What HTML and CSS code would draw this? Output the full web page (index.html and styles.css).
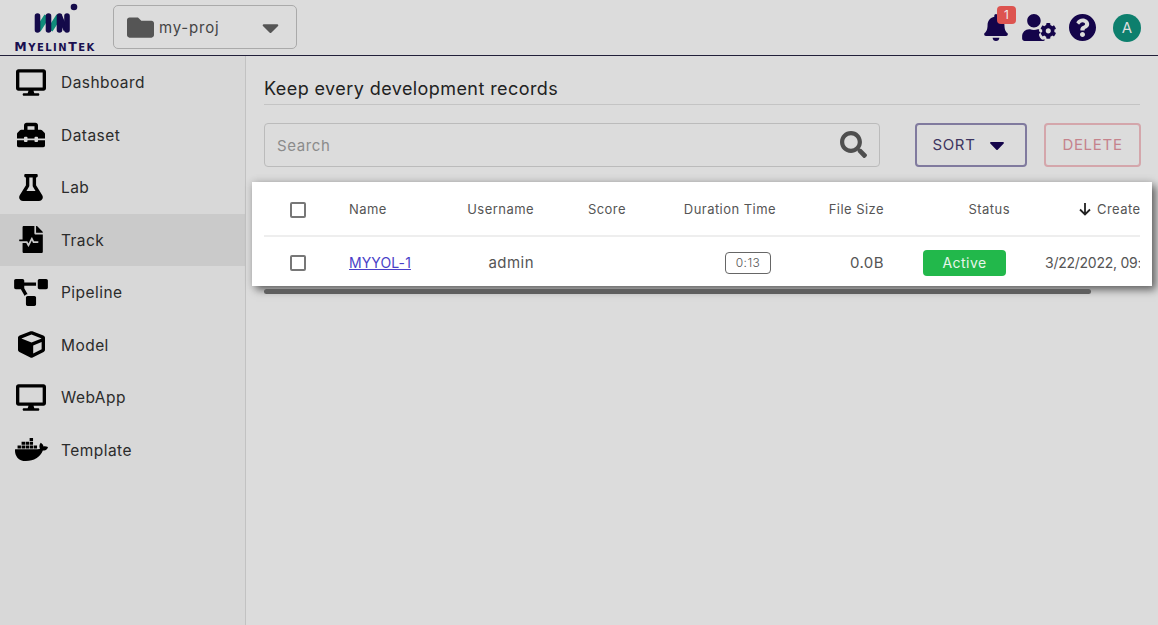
FILE: index.html
```html
<!DOCTYPE html>
<html lang="en">
<head>
    <meta charset="UTF-8">
    <title>Track</title>
    <link rel="stylesheet" href="styles.css">
</head>
<body>
    <header class="topbar">
        <div class="brand">
            <svg class="brand-mark" viewBox="0 0 44 32">
                <circle cx="40" cy="4" r="3.3" fill="#140a4a"/>
                <path d="M4 27L13 13M16 27L25 13" stroke="#0f8c7a" stroke-width="6" fill="none"/>
                <path d="M26 14L32 27" stroke="#140a4a" stroke-width="5" fill="none"/>
                <path d="M3.5 13V27M14.5 13V27M25.5 13V27M33 13V27" stroke="#140a4a" stroke-width="5.6" stroke-linecap="round" fill="none"/>
            </svg>
            <div class="brand-name">M<small>YELIN</small>T<small>EK</small></div>
        </div>
        <div class="project-select">
            <svg class="folder-icon" viewBox="0 0 512 512"><path d="M464 128H272l-64-64H48C21.49 64 0 85.49 0 112v288c0 26.51 21.49 48 48 48h416c26.51 0 48-21.49 48-48V176c0-26.51-21.49-48-48-48z"/></svg>
            <span class="project-name">my-proj</span>
            <svg class="project-caret" viewBox="0 0 320 512"><path d="M31.3 192h257.3c17.8 0 26.7 21.5 14.1 34.1L174.1 354.8c-7.8 7.8-20.5 7.8-28.3 0L17.2 226.1C4.6 213.5 13.5 192 31.3 192z"/></svg>
        </div>
        <div class="top-actions">
            <div class="bell">
                <svg class="top-icon bell-icon" viewBox="0 0 448 512"><path d="M224 512c35.32 0 63.97-28.65 63.97-64H160.03c0 35.35 28.65 64 63.97 64zm215.39-149.71c-19.32-20.76-55.47-51.99-55.47-154.29 0-77.7-54.48-139.9-127.94-155.16V32c0-17.67-14.32-32-31.98-32s-31.98 14.33-31.98 32v20.84C118.56 68.1 64.08 130.3 64.08 208c0 102.3-36.15 133.53-55.47 154.29-6 6.45-8.66 14.16-8.61 21.71.11 16.4 12.98 32 32.1 32h383.8c19.12 0 32-15.6 32.1-32 .05-7.55-2.61-15.27-8.61-21.71z"/></svg>
                <span class="bell-badge">1</span>
            </div>
            <svg class="top-icon cog-icon" viewBox="0 0 640 512"><path d="M610.5 341.3c2.6-14.1 2.6-28.5 0-42.6l25.8-14.9c3-1.7 4.3-5.2 3.3-8.5-6.7-21.6-18.2-41.2-33.2-57.4-2.3-2.5-6-3.1-9-1.4l-25.8 14.9c-10.9-9.3-23.4-16.5-36.9-21.3v-29.8c0-3.4-2.4-6.4-5.7-7.1-22.3-5-45-4.8-66.2 0-3.3.7-5.7 3.7-5.7 7.1v29.8c-13.5 4.8-26 12-36.9 21.3l-25.8-14.9c-2.9-1.7-6.7-1.1-9 1.4-15 16.2-26.5 35.8-33.2 57.4-1 3.3.4 6.8 3.3 8.5l25.8 14.9c-2.6 14.1-2.6 28.5 0 42.6l-25.8 14.9c-3 1.7-4.3 5.2-3.3 8.5 6.7 21.6 18.2 41.1 33.2 57.4 2.3 2.5 6 3.1 9 1.4l25.8-14.9c10.9 9.3 23.4 16.5 36.9 21.3v29.8c0 3.4 2.4 6.4 5.7 7.1 22.3 5 45 4.8 66.2 0 3.3-.7 5.7-3.7 5.7-7.1v-29.8c13.5-4.8 26-12 36.9-21.3l25.8 14.9c2.9 1.7 6.7 1.1 9-1.4 15-16.2 26.5-35.8 33.2-57.4 1-3.3-.4-6.8-3.3-8.5l-25.8-14.9zM496 368.5c-26.8 0-48.5-21.8-48.5-48.5s21.8-48.5 48.5-48.5 48.5 21.8 48.5 48.5-21.7 48.5-48.5 48.5zM224 256c70.7 0 128-57.3 128-128S294.7 0 224 0 96 57.3 96 128s57.3 128 128 128zm201.2 226.5c-2.3-1.2-4.6-2.6-6.8-3.9l-7.9 4.6c-6 3.4-12.8 5.3-19.6 5.3-10.9 0-21.4-4.6-28.9-12.6-18.3-19.8-32.3-43.9-40.2-69.6-5.5-17.7 1.9-36.4 17.9-45.7l7.9-4.6c-.1-2.6-.1-5.2 0-7.8l-7.9-4.6c-16-9.2-23.4-28-17.9-45.7.9-2.9 2.2-5.8 3.2-8.7-3.8-.3-7.5-1.2-11.4-1.2h-16.7c-22.2 10.2-46.9 16-72.9 16s-50.6-5.8-72.9-16h-16.7C60.2 288 0 348.2 0 422.4V464c0 26.5 21.5 48 48 48h352c10.1 0 19.5-3.2 27.2-8.5-1.2-3.8-2-7.7-2-11.8v-9.2z"/></svg>
            <svg class="top-icon help-icon" viewBox="8 8 496 496"><path d="M504 256c0 136.997-111.043 248-248 248S8 392.997 8 256C8 119.083 119.043 8 256 8s248 111.083 248 248zM262.655 90c-54.497 0-89.255 22.957-116.549 63.758-3.536 5.286-2.353 12.415 2.715 16.258l34.699 26.31c5.205 3.947 12.621 3.008 16.665-2.122 17.864-22.658 30.113-35.797 57.303-35.797 20.429 0 45.698 13.148 45.698 32.958 0 14.976-12.363 22.667-32.534 33.976C247.128 238.528 216 254.941 216 296v4c0 6.627 5.373 12 12 12h56c6.627 0 12-5.373 12-12v-1.333c0-28.462 83.186-29.647 83.186-106.667 0-58.002-60.165-102-116.531-102zM256 338c-25.365 0-46 20.635-46 46 0 25.364 20.635 46 46 46s46-20.636 46-46c0-25.365-20.635-46-46-46z"/></svg>
            <div class="avatar">A</div>
        </div>
    </header>

    <div class="layout">
        <nav class="sidebar">
            <a class="nav-item">
                <svg class="nav-icon icon-desktop" viewBox="0 0 576 512"><path d="M528 0H48C21.5 0 0 21.5 0 48v320c0 26.5 21.5 48 48 48h192l-16 48h-72c-13.3 0-24 10.7-24 24s10.7 24 24 24h272c13.3 0 24-10.7 24-24s-10.7-24-24-24h-72l-16-48h192c26.5 0 48-21.5 48-48V48c0-26.5-21.5-48-48-48zm-16 352H64V64h448v288z"/></svg>
                <span>Dashboard</span>
            </a>
            <a class="nav-item">
                <svg class="nav-icon icon-toolbox" viewBox="0 0 512 512"><path d="M502.63 214.63l-45.25-45.25c-6-6-14.14-9.37-22.63-9.37H384V80c0-26.51-21.49-48-48-48H176c-26.51 0-48 21.49-48 48v80H77.25c-8.49 0-16.62 3.37-22.63 9.37L9.37 214.63c-6 6-9.37 14.14-9.37 22.63V320h128v-16c0-8.84 7.16-16 16-16h32c8.84 0 16 7.16 16 16v16h128v-16c0-8.84 7.16-16 16-16h32c8.84 0 16 7.16 16 16v16h128v-82.75c0-8.48-3.37-16.62-9.37-22.62zM320 160H192V96h128v64zm64 208c0 8.84-7.16 16-16 16h-32c-8.84 0-16-7.16-16-16v-16H192v16c0 8.84-7.16 16-16 16h-32c-8.84 0-16-7.16-16-16v-16H0v96c0 17.67 14.33 32 32 32h448c17.67 0 32-14.33 32-32v-96H384v16z"/></svg>
                <span>Dataset</span>
            </a>
            <a class="nav-item">
                <svg class="nav-icon icon-flask" viewBox="0 0 448 512"><path d="M437.2 403.5L320 215V64h8c13.3 0 24-10.7 24-24V24c0-13.3-10.7-24-24-24H120c-13.3 0-24 10.7-24 24v16c0 13.3 10.7 24 24 24h8v151L10.8 403.5C-18.5 450.6 15.3 512 70.9 512h306.2c55.7 0 89.4-61.5 60.1-108.5zM137.9 320l48.2-77.6c3.7-5.2 5.8-11.6 5.8-18.4V64h64v160c0 6.9 2.2 13.2 5.8 18.4l48.2 77.6h-172z"/></svg>
                <span>Lab</span>
            </a>
            <a class="nav-item nav-active">
                <svg class="nav-icon icon-track" viewBox="0 0 448 512"><path d="M288 136V0H88C74.7 0 64 10.7 64 24v232H8c-4.4 0-8 3.6-8 8v16c0 4.4 3.6 8 8 8h140.9c3 0 5.8 1.7 7.2 4.4l19.9 39.8 56.8-113.7c2.9-5.9 11.4-5.9 14.3 0l34.7 69.5H352c8.8 0 16 7.2 16 16s-7.2 16-16 16h-89.9L240 275.8l-56.8 113.7c-2.9 5.9-11.4 5.9-14.3 0L134.1 320H64v168c0 13.3 10.7 24 24 24h336c13.3 0 24-10.7 24-24V160H312c-13.2 0-24-10.8-24-24zm153-31L343.1 7c-4.5-4.5-10.6-7-17-7H320v128h128v-6.1c0-6.3-2.5-12.4-7-16.9z"/></svg>
                <span>Track</span>
            </a>
            <a class="nav-item">
                <svg class="nav-icon icon-pipeline" viewBox="0 0 640 512"><path d="M384 320H256c-17.67 0-32 14.33-32 32v128c0 17.67 14.33 32 32 32h128c17.67 0 32-14.33 32-32V352c0-17.67-14.33-32-32-32zM192 32c0-17.67-14.33-32-32-32H32C14.33 0 0 14.33 0 32v128c0 17.67 14.33 32 32 32h95.72l73.16 128.04C211.98 300.98 232.4 288 256 288h.28L192 175.51V128h224V64H192V32zM608 0H480c-17.67 0-32 14.33-32 32v128c0 17.67 14.33 32 32 32h128c17.67 0 32-14.33 32-32V32c0-17.67-14.33-32-32-32z"/></svg>
                <span>Pipeline</span>
            </a>
            <a class="nav-item">
                <svg class="nav-icon icon-cube" viewBox="0 0 512 512"><path d="M239.1 6.3l-208 78c-18.7 7-31.1 25-31.1 45v225.1c0 18.2 10.3 34.8 26.5 42.9l208 104c13.5 6.8 29.4 6.8 42.9 0l208-104c16.3-8.1 26.5-24.8 26.5-42.9V129.3c0-20-12.4-37.9-31.1-44.9l-208-78C262 2.2 250 2.2 239.1 6.3zM256 68.4l192 72v1.1l-192 78-192-78v-1.1l192-72zm32 356V275.5l160-65v133.9l-160 80z"/></svg>
                <span>Model</span>
            </a>
            <a class="nav-item">
                <svg class="nav-icon icon-desktop" viewBox="0 0 576 512"><path d="M528 0H48C21.5 0 0 21.5 0 48v320c0 26.5 21.5 48 48 48h192l-16 48h-72c-13.3 0-24 10.7-24 24s10.7 24 24 24h272c13.3 0 24-10.7 24-24s-10.7-24-24-24h-72l-16-48h192c26.5 0 48-21.5 48-48V48c0-26.5-21.5-48-48-48zm-16 352H64V64h448v288z"/></svg>
                <span>WebApp</span>
            </a>
            <a class="nav-item">
                <svg class="nav-icon icon-docker" viewBox="0 0 640 512"><path d="M349.9 236.3h-66.1v-59.4h66.1v59.4zm0-204.3h-66.1v60.7h66.1V32zm78.2 144.8H362v59.4h66.1v-59.4zm-156.3-72.1h-66.1v60.1h66.1v-60.1zm78.1 0h-66.1v60.1h66.1v-60.1zm276.8 100c-14.4-9.7-47.6-13.2-73.1-8.4-3.3-24-16.7-44.9-41.1-63.7l-14-9.3-9.3 14c-18.4 27.8-23.4 73.6-3.7 103.8-8.7 4.7-25.8 11.1-48.4 10.7H2.4c-8.7 50.8 5.8 116.8 44 162.1 37.1 43.9 92.7 66.2 165.4 66.2 157.4 0 273.9-72.5 328.4-204.2 21.4.4 67.6.1 91.3-45.2 1.5-2.5 6.6-13.2 8.5-17.1l-13.3-8.9zm-511.1-27.9h-66v59.4h66.1v-59.4zm78.1 0h-66.1v59.4h66.1v-59.4zm78.1 0h-66.1v59.4h66.1v-59.4zm-78.1-72.1h-66.1v60.1h66.1v-60.1z"/></svg>
                <span>Template</span>
            </a>
        </nav>

        <main class="content">
            <h1 class="page-title">Keep every development records</h1>
            <div class="toolbar">
                <div class="search-box">
                    <span class="search-label">Search</span>
                    <svg class="search-icon" viewBox="0 0 512 512"><path d="M505 442.7L405.3 343c-4.5-4.5-10.6-7-17-7H372c27.6-35.3 44-79.7 44-128C416 93.1 322.9 0 208 0S0 93.1 0 208s93.1 208 208 208c48.3 0 92.7-16.4 128-44v16.3c0 6.4 2.5 12.5 7 17l99.7 99.7c9.4 9.4 24.6 9.4 33.9 0l28.3-28.3c9.4-9.4 9.4-24.6.1-34zM208 336c-70.7 0-128-57.2-128-128 0-70.7 57.2-128 128-128 70.7 0 128 57.2 128 128 0 70.7-57.2 128-128 128z"/></svg>
                </div>
                <button class="btn btn-sort">SORT
                    <svg class="sort-caret" viewBox="0 0 320 512"><path d="M31.3 192h257.3c17.8 0 26.7 21.5 14.1 34.1L174.1 354.8c-7.8 7.8-20.5 7.8-28.3 0L17.2 226.1C4.6 213.5 13.5 192 31.3 192z"/></svg>
                </button>
                <button class="btn btn-delete">DELETE</button>
            </div>

            <section class="table-card">
                <div class="table-clip">
                    <div class="table-row table-head">
                        <div class="cell-check"><span class="checkbox"></span></div>
                        <div>Name</div>
                        <div class="cell-right">Username</div>
                        <div class="cell-right">Score</div>
                        <div class="cell-right">Duration Time</div>
                        <div class="cell-right">File Size</div>
                        <div class="cell-right">Status</div>
                        <div class="cell-created head-created">
                            <svg class="sort-arrow" viewBox="0 0 14 14"><path d="M7 1V12M2 7.5L7 12.5L12 7.5" fill="none" stroke="#222" stroke-width="1.8"/></svg>
                            <span>Created</span>
                        </div>
                    </div>
                    <div class="table-row table-body">
                        <div class="cell-check"><span class="checkbox"></span></div>
                        <div><a class="run-link">MYYOL-1</a></div>
                        <div class="cell-right">admin</div>
                        <div class="cell-right"></div>
                        <div class="cell-right"><span class="duration">0:13</span></div>
                        <div class="cell-right">0.0B</div>
                        <div class="cell-right"><span class="status-pill">Active</span></div>
                        <div class="cell-created cell-date">3/22/2022, 09:41:07</div>
                    </div>
                </div>
            </section>
            <div class="scroll-thumb"></div>
        </main>
    </div>
</body>
</html>
```

FILE: styles.css
```css
* {
    box-sizing: border-box;
}

html, body {
    margin: 0;
    height: 100%;
    overflow: hidden;
}

body {
    font-family: "Inter", "Open Sans", sans-serif;
    font-size: 15px;
    color: #333;
    background-color: #dcdcdc;
}

/* top bar */
.topbar {
    display: flex;
    align-items: center;
    height: 56px;
    border-bottom: 1px solid #22203a;
    padding-right: 17px;
}

.brand {
    display: flex;
    flex-direction: column;
    align-items: center;
    width: 110px;
    height: 55px;
    margin-right: 3px;
}

.brand-mark {
    align-self: flex-start;
    width: 44px;
    height: 32px;
    margin: 3px 0 0 34px;
}

.brand-name {
    margin-top: 6px;
    font-family: "DejaVu Sans", sans-serif;
    font-size: 12.5px;
    line-height: 11px;
    font-weight: 700;
    color: #1a1050;
    letter-spacing: 1.5px;
}

.brand-name small {
    font-size: 10px;
}

.project-select {
    display: flex;
    align-items: center;
    width: 184px;
    height: 44px;
    margin-top: -1px;
    padding: 0 17px 0 13px;
    border: 1px solid #aaa;
    border-radius: 5px;
}

.folder-icon {
    width: 27px;
    height: 27px;
    fill: #555;
}

.project-name {
    flex: 1;
    margin-left: 5px;
    font-size: 15px;
    letter-spacing: 0.8px;
    color: #444;
}

.project-caret {
    width: 17px;
    height: 27px;
    fill: #555;
}

.top-actions {
    display: flex;
    align-items: center;
    margin-left: auto;
}

.top-icon {
    display: block;
    fill: #14044a;
}

.bell {
    position: relative;
}

.bell-icon {
    width: 24px;
    height: 27px;
}

.bell-badge {
    position: absolute;
    top: -8px;
    left: 13px;
    width: 19px;
    height: 18px;
    border-radius: 4px;
    background-color: #dd5450;
    color: #eee;
    font-size: 12px;
    line-height: 18px;
    text-align: center;
}

.cog-icon {
    width: 34px;
    height: 27px;
    margin-left: 14px;
}

.help-icon {
    width: 27px;
    height: 27px;
    margin-left: 13px;
}

.avatar {
    width: 28px;
    height: 28px;
    margin-left: 17px;
    border-radius: 50%;
    background-color: #0d7f6d;
    color: #ddd;
    font-size: 15px;
    line-height: 28px;
    text-align: center;
}

/* sidebar */
.layout {
    display: flex;
    height: 569px;
}

.sidebar {
    flex: none;
    width: 246px;
    border-right: 1px solid #c2c2c2;
    background-color: #d8d8d8;
}

.nav-item {
    display: grid;
    grid-template-columns: 62px 1fr;
    align-items: center;
    justify-items: center;
    height: 52.5px;
    font-size: 15.5px;
    letter-spacing: 0.45px;
    color: #2b2b2b;
}

.nav-item span {
    justify-self: start;
    margin-left: -1px;
    padding-top: 1px;
}

.nav-active {
    background-color: #cacaca;
}

.nav-icon {
    display: block;
    height: 27px;
    fill: #000;
}

.icon-desktop {
    width: 30px;
}

.icon-toolbox {
    width: 28px;
    height: 28px;
}

.icon-flask {
    width: 26px;
}

.icon-track {
    width: 24px;
}

.icon-pipeline {
    width: 34px;
}

.icon-cube {
    width: 27px;
}

.icon-docker {
    width: 33px;
}

/* main column */
.content {
    flex: 1;
    padding: 0 18px;
    min-width: 0;
}

.page-title {
    margin: 0;
    padding-top: 21px;
    height: 49px;
    border-bottom: 1px solid #c4c4c4;
    font-size: 18px;
    font-weight: 400;
    line-height: 24px;
    letter-spacing: 0.42px;
    color: #222;
}

.toolbar {
    display: flex;
    align-items: stretch;
    height: 44px;
    margin-top: 17.5px;
}

.search-box {
    flex: none;
    display: flex;
    align-items: center;
    justify-content: space-between;
    width: 616px;
    padding: 0 12px;
    border: 1px solid #bbb;
    border-radius: 4px;
}

.search-label {
    padding-top: 1px;
    font-size: 15px;
    letter-spacing: 0.6px;
    color: #8b8b8b;
}

.search-icon {
    width: 27px;
    height: 27px;
    fill: #4f4f4f;
}

.btn {
    flex: none;
    height: 44px;
    background: none;
    border-radius: 4px;
    font-family: inherit;
    font-size: 15px;
    letter-spacing: 0.7px;
    padding: 0;
}

.btn-sort {
    display: flex;
    align-items: center;
    justify-content: center;
    gap: 13px;
    width: 112px;
    margin-left: 35px;
    padding-right: 5px;
    border: 2px solid #807a9e;
    color: #3d3560;
}

.sort-caret {
    width: 16px;
    height: 24px;
    fill: #14044a;
}

.btn-delete {
    width: 97px;
    margin-left: 17px;
    border: 2px solid #d4a6ab;
    color: #c5838c;
}

/* spotlighted table */
.table-card {
    margin: 15.5px -12px 0;
    padding: 0 12px;
    height: 104px;
    background-color: #fff;
    box-shadow: 4px 4px 8px rgba(0, 0, 0, 0.5), 0 0 8px rgba(0, 0, 0, 0.15);
}

.table-clip {
    overflow: hidden;
    height: 100%;
}

.table-row {
    display: grid;
    grid-template-columns: 85px 85px 100px 92px 150px 108px 126px 160px;
    align-items: center;
    width: 906px;
    font-size: 13px;
    letter-spacing: 0.45px;
}

.table-head {
    height: 55px;
    padding-top: 1px;
    border-bottom: 2px solid #eee;
    color: #555;
}

.table-head .checkbox {
    margin-top: 1px;
}

.table-body {
    height: 49px;
    padding-top: 2px;
    font-size: 15px;
    color: #555;
}

.cell-check {
    padding-left: 26px;
}

.checkbox {
    display: block;
    width: 16px;
    height: 16px;
    border: 2px solid #777;
    border-radius: 2px;
}

.cell-right {
    text-align: right;
}

.cell-created {
    padding-left: 35px;
    white-space: nowrap;
}

.cell-date {
    font-size: 14px;
    letter-spacing: -0.25px;
}

.head-created {
    display: flex;
    align-items: center;
    padding-left: 68px;
}

.sort-arrow {
    width: 14px;
    height: 14px;
    margin-right: 5px;
}

.run-link {
    font-size: 14px;
    letter-spacing: 0.1px;
    color: #4a3fc8;
    text-decoration: underline;
}

.duration {
    display: inline-block;
    width: 46px;
    height: 22px;
    margin-right: 5px;
    border: 1px solid #666;
    border-radius: 4px;
    font-size: 12px;
    font-weight: 300;
    line-height: 20px;
    text-align: center;
}

.status-pill {
    display: inline-block;
    width: 83px;
    height: 26px;
    margin-right: 4px;
    border-radius: 4px;
    background-color: #22b84b;
    color: #e8f5ea;
    font-size: 14px;
    line-height: 26px;
    text-align: center;
}

.scroll-thumb {
    width: 827px;
    height: 5px;
    margin-top: 3px;
    border-radius: 3px;
    background-color: #5f5f5f;
}
```
